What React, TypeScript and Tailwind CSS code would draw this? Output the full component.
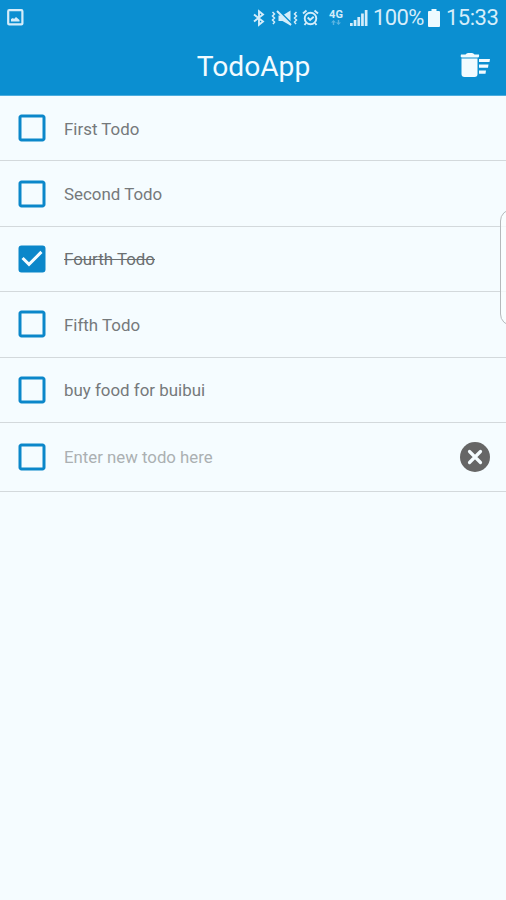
import { useState } from 'react';
import { MdCheckBox, MdCheckBoxOutlineBlank } from 'react-icons/md';

interface Todo {
  id: number;
  title: string;
  done: boolean;
}

const initialTodos: Todo[] = [
  { id: 1, title: 'First Todo', done: false },
  { id: 2, title: 'Second Todo', done: false },
  { id: 4, title: 'Fourth Todo', done: true },
  { id: 5, title: 'Fifth Todo', done: false },
  { id: 6, title: 'buy food for buibui', done: false },
];

function StatusBar() {
  return (
    <div className="flex h-[35px] items-center pl-[7px] pr-[8px] text-[#d5edfa]">
      <svg width="17" height="17" viewBox="0 0 17 17" fill="none">
        <rect x="1.2" y="1.2" width="14.2" height="14.2" rx="1" stroke="currentColor" strokeWidth="2.2" />
        <path d="M4 12.5V10l2-1 1 1 2-2 3.5 3v1.5z" fill="currentColor" />
      </svg>

      {/* bluetooth */}
      <svg className="ml-auto" width="12" height="18" viewBox="0 0 12 18" fill="none" stroke="currentColor" strokeWidth="1.9">
        <path d="M1 5.500l9 7-4 3.300V2.200l4 3.300-9 7" />
      </svg>
      {/* vibrate / muted */}
      <svg className="ml-[6px]" width="27" height="18" viewBox="0 0 26 18" fill="none" stroke="currentColor">
        <path d="M1 3l2 2-2 2 2 2-2 2 2 2-1.500 2M25 3l-2 2 2 2-2 2 2 2-2 2 1.500 2" strokeWidth="1.500" />
        <path d="M7 6.500h4l8-5v15l-8-4.500H7z" fill="currentColor" stroke="none" />
        <path d="M7 1.500l14 14" stroke="#0b8fd1" strokeWidth="1.800" />
        <path d="M5.500 2l14 14" strokeWidth="2" />
      </svg>
      {/* alarm */}
      <svg className="ml-[4px]" width="17" height="18" viewBox="0 0 17 18" fill="none" stroke="currentColor" strokeWidth="1.900">
        <circle cx="8.500" cy="9.500" r="5.800" />
        <path d="M5.700 8.500l2.400 2.400 3.600-3.200M1 4.500l3.500-3M16 4.500l-3.500-3M4 14l-1.500 2M13 14l1.500 2" />
      </svg>
      <div className="ml-[9px] flex w-4 flex-col items-center">
        <span className="text-[11px] font-bold leading-[10px]">4G</span>
        <svg width="10" height="6" viewBox="0 0 10 6" fill="currentColor" opacity="0.4">
          <path d="M2.500 0L5 2.500H3.200V5H1.800V2.500H0zM6.800 0h1.400v2.500H10L7.500 5 5 2.500h1.800z" />
        </svg>
      </div>
      <svg className="ml-[6px]" width="18" height="18" viewBox="0 0 18 18" fill="currentColor">
        <path d="M0 14h2.700v3H0zM3.700 11h2.700v6H3.700zM7.400 8h2.700v9H7.400zM11.100 4.500h2.700V17h-2.700zM14.800 1h2.700v16h-2.700z" />
      </svg>
      <span className="ml-[5px] w-[51px] whitespace-nowrap text-[22px] leading-9 tracking-[-0.600px]">100%</span>
      <svg className="ml-[4px]" width="12" height="18" viewBox="0 0 12 18" fill="#eefaff">
        <path d="M3.500 0h5v2H11a1 1 0 0 1 1 1v14a1 1 0 0 1-1 1H1a1 1 0 0 1-1-1V3a1 1 0 0 1 1-1h2.500z" />
      </svg>
      <span className="ml-[6px] w-[52px] whitespace-nowrap text-[22px] leading-9 tracking-[-0.5px]">15:33</span>
    </div>
  );
}

function SweepIcon() {
  return (
    <svg width="36" height="36" viewBox="0 0 36 36" fill="currentColor">
      <path d="M4 7.500h4.500Q9.500 6 11 6h4q1.500 0 2.500 1.500H22Q22.500 10.500 21 10.500H5Q3 10.500 4 7.500z" />
      <path d="M4.500 11.500h16V27a3 3 0 0 1-3 3h-10a3 3 0 0 1-3-3z" />
      <path d="M22 12h11l-.5 3H22zM22 17.500h9.500l-.5 3.300h-9zM22 23.500h7l-.5 3.200H22z" />
    </svg>
  );
}

function ClearIcon() {
  return (
    <svg width="36" height="36" viewBox="0 0 36 36">
      <circle cx="18" cy="18" r="15" fill="currentColor" />
      <path d="M12.500 12.500l11 11M23.500 12.500l-11 11" stroke="#f5fcff" strokeWidth="3.200" strokeLinecap="round" />
    </svg>
  );
}

export default function App() {
  const [todos, setTodos] = useState(initialTodos);
  const [draft, setDraft] = useState('');

  const toggle = (id: number) => {
    setTodos(todos.map((t) => (t.id === id ? { ...t, done: !t.done } : t)));
  };

  return (
    <div className="relative h-[900px] w-[506px] overflow-hidden bg-[#f5fcff] font-['Roboto',sans-serif]">
      <header className="h-24 border-b border-[#4cadde] bg-[#0b8fd1]">
        <StatusBar />
        <div className="grid h-[60px] grid-cols-[1fr_auto_1fr] items-center pl-[14px] pr-[13px]">
          <h1 className="col-start-2 pt-[4px] text-[28.200px] leading-none text-[#f2fbff]">TodoApp</h1>
          <button
            className="justify-self-end text-[#f2fbff]"
            onClick={() => setTodos(todos.filter((t) => !t.done))}
          >
            <SweepIcon />
          </button>
        </div>
      </header>

      <ul>
        {todos.map((todo) => (
          <li
            key={todo.id}
            className="flex h-[65.400px] items-center border-b border-[#d3d9dc] pl-[14px]"
          >
            <button className="text-[#0b87ca]" onClick={() => toggle(todo.id)}>
              {todo.done ? <MdCheckBox size={36} /> : <MdCheckBoxOutlineBlank size={36} />}
            </button>
            <span
              className={
                todo.done
                  ? 'ml-[14px] pt-[2px] text-[16.900px] text-[#6b6f71] line-through'
                  : 'ml-[14px] pt-[2px] text-[16.900px] text-[#75797b]'
              }
            >
              {todo.title}
            </span>
          </li>
        ))}
      </ul>

      <div className="flex h-[69px] items-center border-b border-[#d3d9dc] pl-[14px] pr-[13px]">
        <span className="text-[#0b87ca]">
          <MdCheckBoxOutlineBlank size={36} />
        </span>
        <input
          className="ml-[14px] min-w-0 flex-1 bg-transparent pt-[2px] text-[16.800px] outline-none placeholder:text-[#abb0b2]"
          placeholder="Enter new todo here"
          value={draft}
          onChange={(e) => setDraft(e.target.value)}
        />
        <button className="text-[#666666]" onClick={() => setDraft('')}>
          <ClearIcon />
        </button>
      </div>

      {/* edge panel handle */}
      <div className="absolute left-[500px] top-[209px] h-[117px] w-6 rounded-[12px] border border-[#b5babc] bg-[#fafeff]/80" />
    </div>
  );
}
